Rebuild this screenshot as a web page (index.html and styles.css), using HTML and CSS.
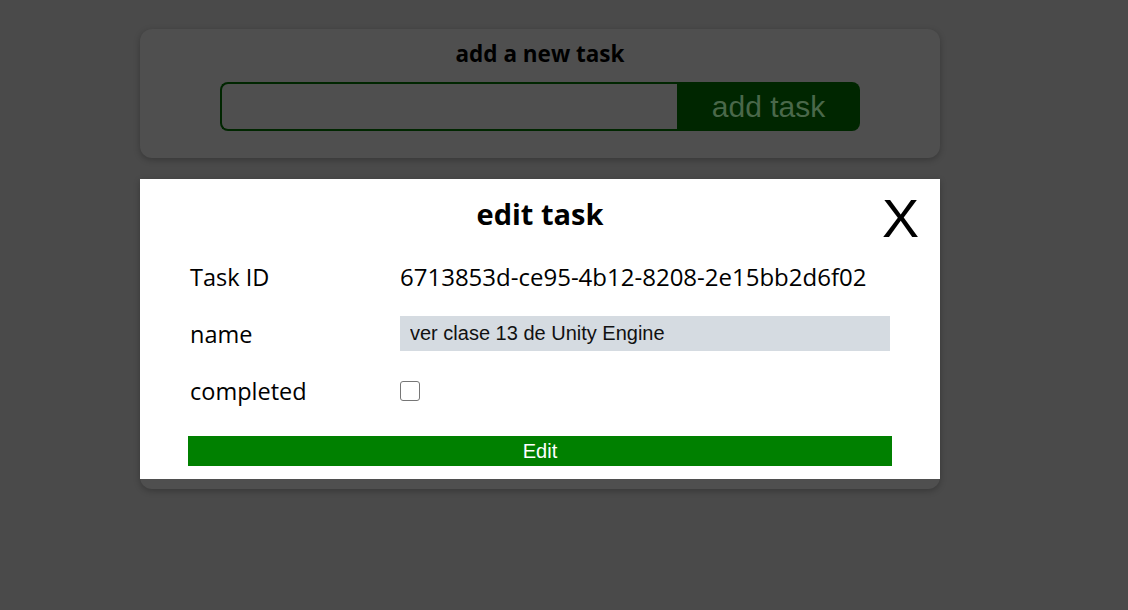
FILE: index.html
```html
<!DOCTYPE html>
<html>
<head>
<meta charset="utf-8">
<link rel="stylesheet" href="styles.css">
</head>
<body>
<div class="page">
  <section class="card add-card">
    <h2 class="add-title">add a new task</h2>
    <form class="add-form">
      <input class="add-input" type="text">
      <button class="add-btn" type="button">add task</button>
    </form>
  </section>
  <section class="card list-card">
    <div class="modal">
      <div class="modal-head">
        <h2 class="modal-title">edit task</h2>
        <span class="close">X</span>
      </div>
      <div class="row">
        <span class="label">Task ID</span>
        <span class="value">6713853d-ce95-4b12-8208-2e15bb2d6f02</span>
      </div>
      <div class="row">
        <span class="label">name</span>
        <input class="name-input" type="text" value="ver clase 13 de Unity Engine">
      </div>
      <div class="row">
        <span class="label">completed</span>
        <span class="check"></span>
      </div>
      <button class="edit-btn" type="button">Edit</button>
    </div>
  </section>
</div>
</body>
</html>
```

FILE: styles.css
```css
html, body {
  margin: 0;
  padding: 0;
  height: 100%;
}
body {
  background: #4a4a4a;
  font-family: "Open Sans", "Noto Sans", sans-serif;
}
.page {
  display: flex;
  flex-direction: column;
  align-items: flex-start;
  padding-top: 29px;
  padding-left: 140px;
  gap: 21px;
}
.card {
  width: 800px;
  background: #4f4f4f;
  border-radius: 12px;
  box-shadow: 0 2px 6px rgba(0,0,0,0.25);
}
.add-card {
  height: 129px;
  display: flex;
  flex-direction: column;
  align-items: center;
  box-sizing: border-box;
  padding-top: 10px;
}
.add-title {
  margin: 0;
  font-size: 22.5px;
  font-weight: 700;
  line-height: 30px;
  color: #000;
}
.add-form {
  margin-top: 13px;
  display: flex;
  width: 640px;
  height: 49px;
}
.add-input {
  flex: 1;
  margin: 0;
  border: 2px solid #002600;
  border-right: none;
  border-radius: 8px 0 0 8px;
  background: transparent;
  box-sizing: border-box;
}
.add-btn {
  width: 183px;
  margin: 0;
  border: none;
  border-radius: 0 8px 8px 0;
  background: #002600;
  color: #4a684a;
  font-family: "Liberation Sans", Arial, sans-serif;
  font-size: 30px;
  padding: 0;
}
.list-card {
  height: 310px;
  border-radius: 0 0 12px 12px;
}
.modal {
  background: #fff;
  height: 300px;
  box-sizing: border-box;
  padding: 0 48px 0 48px;
  display: flex;
  flex-direction: column;
}
.modal-head {
  position: relative;
  display: flex;
  justify-content: center;
  padding-top: 15px;
  height: 69px;
  box-sizing: border-box;
}
.modal-title {
  margin: 0;
  font-size: 29px;
  font-weight: 700;
  line-height: 40px;
  color: #000;
}
.close {
  position: absolute;
  right: -26px;
  top: 15px;
  font-family: "Liberation Sans", Arial, sans-serif;
  font-size: 53px;
  line-height: 50px;
  font-weight: 400;
  color: #000;
  transform: scaleX(1.05);
}
.row {
  display: flex;
  align-items: center;
  height: 57px;
  padding-left: 2px;
}
.label {
  width: 210px;
  font-size: 23.5px;
  color: #000;
}
.value {
  font-size: 24px;
  color: #000;
}
.name-input {
  width: 490px;
  height: 35px;
  box-sizing: border-box;
  border: none;
  margin: 0;
  background: #d5dbe1;
  padding: 0 10px;
  font-family: "Liberation Sans", Arial, sans-serif;
  font-size: 20px;
  color: #111;
}
.check {
  width: 18px;
  height: 18px;
  border: 1px solid #767676;
  border-radius: 3px;
  background: #fff;
}
.edit-btn {
  margin-top: 17px;
  height: 30px;
  border: none;
  background: #008000;
  color: #fff;
  font-family: "Liberation Sans", Arial, sans-serif;
  font-size: 20px;
  padding: 0;
}
```
